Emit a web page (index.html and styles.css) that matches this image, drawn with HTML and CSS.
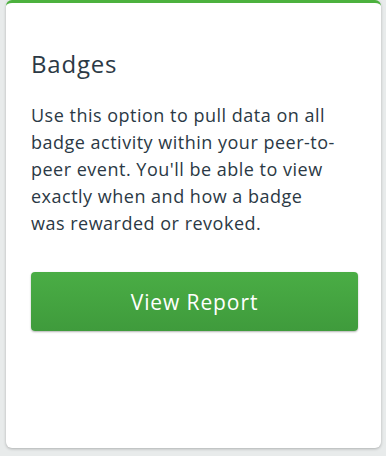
FILE: index.html
```html
<!DOCTYPE html>
<html>
<head>
<meta charset="utf-8">
<link rel="stylesheet" href="styles.css">
</head>
<body>
<div class="card">
  <h2 class="title">Badges</h2>
  <p class="desc">Use this option to pull data on all badge activity within your peer-to-peer event. You'll be able to view exactly when and how a badge was&nbsp;rewarded or revoked.</p>
  <button class="btn">View Report</button>
</div>
</body>
</html>
```
FILE: styles.css
```css
html, body {
  margin: 0;
  padding: 0;
  background: #e8ebeb;
}
body {
  width: 386px;
  height: 456px;
  padding-left: 6px;
  box-sizing: border-box;
  font-family: "Open Sans", "Liberation Sans", sans-serif;
}
.card {
  width: 375px;
  height: 448px;
  box-sizing: border-box;
  background: #fff;
  border-top: 3px solid #4cb13e;
  border-radius: 6px;
  box-shadow: 0 1px 3px rgba(0,0,0,0.25);
  padding: 46px 24px 0 25px;
  display: flex;
  flex-direction: column;
}
.title {
  margin: 0;
  font-size: 24px;
  font-weight: 400;
  color: #2b3945;
  line-height: 30px;
  letter-spacing: 0.8px;
}
.desc {
  margin: 23px 0 0;
  max-width: 320px;
  font-size: 18px;
  line-height: 27px;
  letter-spacing: 0.5px;
  color: #2b3945;
}
.btn {
  margin-top: 35px;
  width: 327px;
  height: 59px;
  flex-shrink: 0;
  border: none;
  border-radius: 4px;
  background: linear-gradient(#4aad45, #3f9b3c);
  box-shadow: 0 1px 2px rgba(0,0,0,0.3);
  color: #fff;
  font-family: inherit;
  font-size: 21px;
  letter-spacing: 0.9px;
  padding: 0;
}
```
